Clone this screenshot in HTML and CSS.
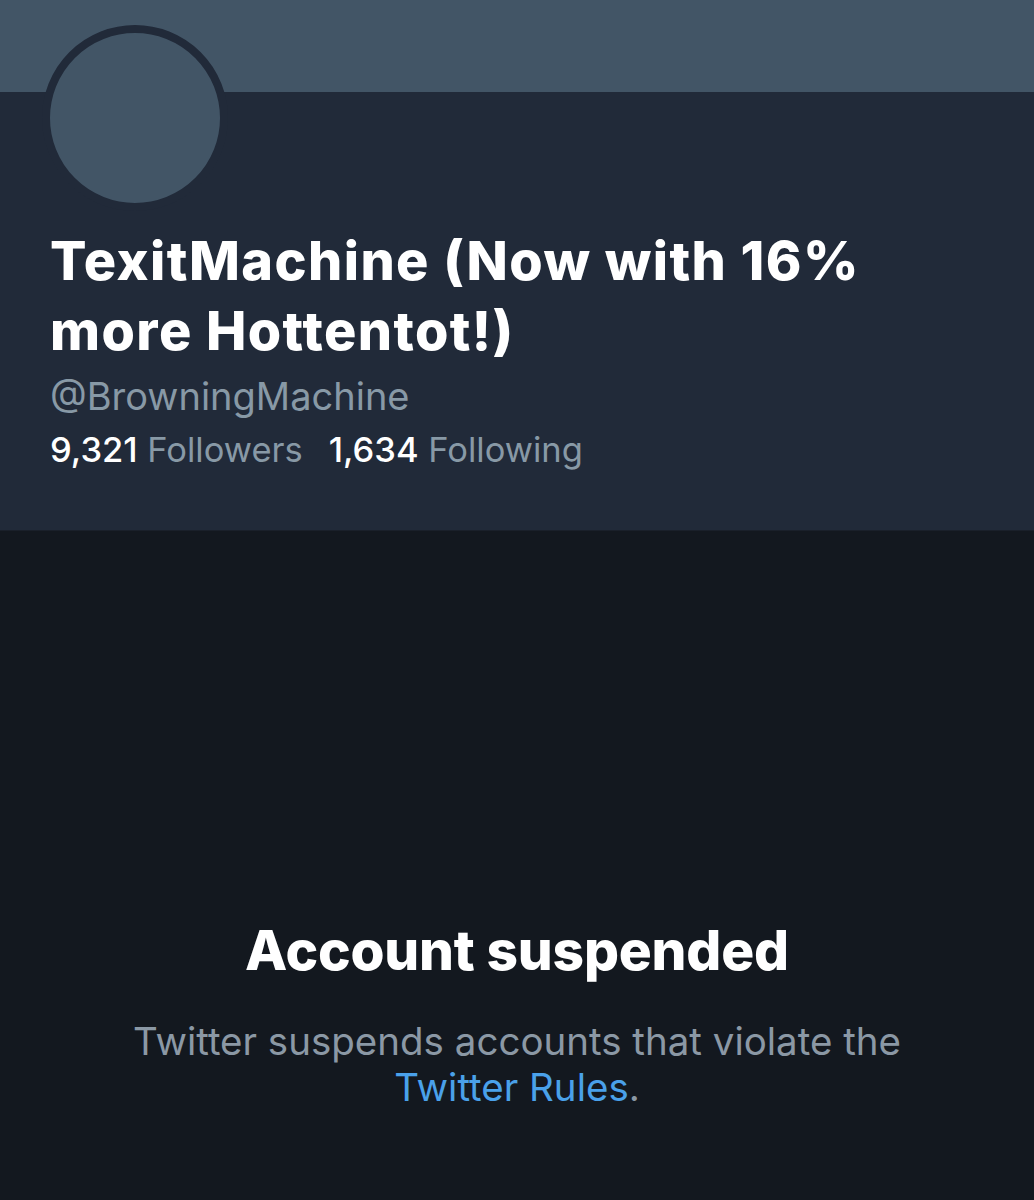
FILE: index.html
```html
<!DOCTYPE html>
<html lang="en">
<head>
<meta charset="utf-8">
<title>Account suspended</title>
<link rel="stylesheet" href="styles.css">
</head>
<body>
<div class="page">
  <div class="banner"></div>
  <section class="profile">
    <div class="avatar"></div>
    <h1 class="name">TexitMachine (Now with 16% more Hottentot!)</h1>
    <div class="handle">@BrowningMachine</div>
    <div class="stats">
      <span class="stat"><b>9,321</b> Followers</span>
      <span class="stat"><b>1,634</b> Following</span>
    </div>
  </section>
  <section class="suspended">
    <h2 class="title">Account suspended</h2>
    <p class="msg">Twitter suspends accounts that violate the <a class="link" href="#">Twitter Rules</a>.</p>
  </section>
</div>
</body>
</html>
```

FILE: styles.css
```css
html, body {
  margin: 0;
  padding: 0;
  background: #13181f;
}
.page {
  width: 1034px;
  height: 1200px;
  display: flex;
  flex-direction: column;
  font-family: Inter, "Noto Sans", sans-serif;
  overflow: hidden;
}
.banner {
  height: 92px;
  background: #425566;
  flex: none;
}
.profile {
  background: #212a39;
  height: 439px;
  padding: 0 40px 0 50px;
  box-sizing: border-box;
  border-bottom: 1px solid #1a202a;
  flex: none;
}
.avatar {
  width: 170px;
  height: 170px;
  border-radius: 50%;
  background: #425566;
  border: 8px solid #212a39;
  margin: -67px 0 0 -8px;
}
.name {
  margin: 15px 0 0;
  color: #ffffff;
  font-size: 54px;
  line-height: 70px;
  font-weight: 800;
  letter-spacing: 1.4px;
  max-width: 860px;
}
.handle {
  color: #8899a6;
  font-size: 38px;
  line-height: 52px;
  margin-top: 4px;
}
.stats {
  color: #8899a6;
  font-size: 34.5px;
  line-height: 52px;
  margin-top: 2px;
  display: flex;
  gap: 26px;
}
.stat b {
  color: #ffffff;
  font-weight: 500;
}
.suspended {
  flex: 1;
  background: #13181f;
  display: flex;
  flex-direction: column;
  align-items: center;
  text-align: center;
  padding-top: 384px;
  box-sizing: border-box;
}
.title {
  margin: 0;
  color: #ffffff;
  font-size: 55px;
  line-height: 70px;
  font-weight: 800;
  letter-spacing: -0.2px;
}
.msg {
  margin: 33px 0 0;
  color: #8b98a5;
  font-size: 38.5px;
  line-height: 46px;
  max-width: 820px;
}
.link {
  color: #4aa1ea;
  text-decoration: none;
}
```
